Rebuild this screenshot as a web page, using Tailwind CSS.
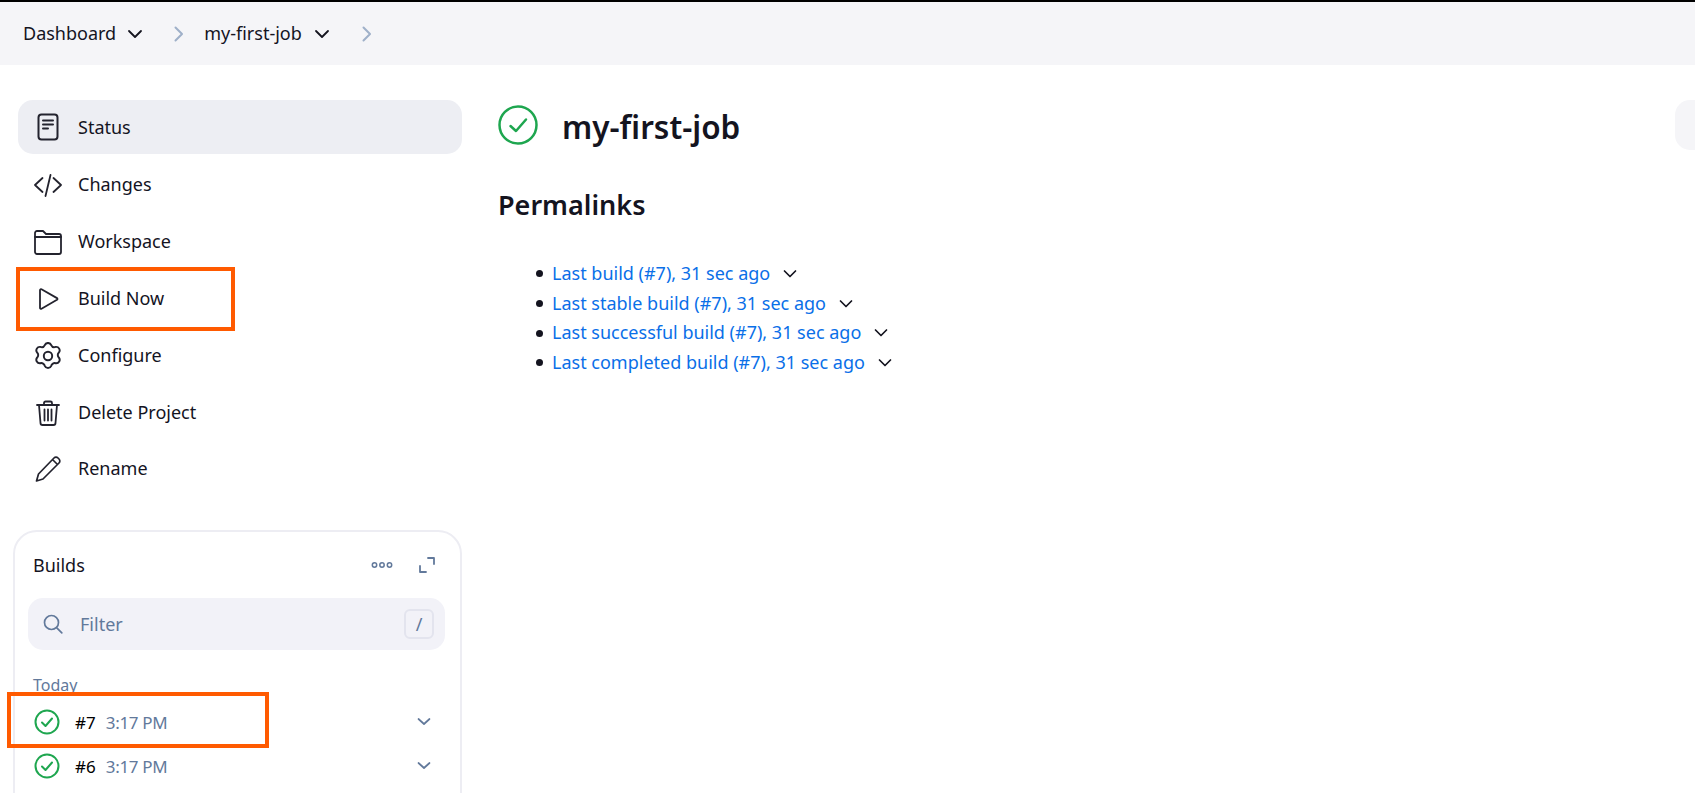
<!DOCTYPE html>
<html lang="en">
<head>
  <meta charset="UTF-8" />
  <title>my-first-job</title>
  <script src="https://cdn.jsdelivr.net/npm/@tailwindcss/browser@4"></script>
</head>
<body class="relative h-[793px] overflow-hidden bg-white font-['Noto_Sans',sans-serif] text-[#14141f]">
  <!-- breadcrumb -->
  <header class="flex h-[65px] items-center border-t-2 border-black bg-[#f5f5f8] pl-[23px] text-[18px]">
    <span>Dashboard</span>
    <svg class="ml-[11px] h-4 w-4" viewBox="0 0 16 16" fill="none" stroke="#14141f" stroke-width="1.800" stroke-linecap="round" stroke-linejoin="round"><path d="M2 5 8 11l6-6"/></svg>
    <svg class="ml-[28px] h-4 w-4" viewBox="0 0 16 16" fill="none" stroke="#9fb0c9" stroke-width="2" stroke-linecap="round" stroke-linejoin="round"><path d="M4.500 1.500 11 8l-6.500 6.500"/></svg>
    <span class="ml-[17px]">my-first-job</span>
    <svg class="ml-[12px] h-4 w-4" viewBox="0 0 16 16" fill="none" stroke="#14141f" stroke-width="1.800" stroke-linecap="round" stroke-linejoin="round"><path d="M2 5 8 11l6-6"/></svg>
    <svg class="ml-[29px] h-4 w-4" viewBox="0 0 16 16" fill="none" stroke="#9fb0c9" stroke-width="2" stroke-linecap="round" stroke-linejoin="round"><path d="M4.500 1.500 11 8l-6.500 6.500"/></svg>
  </header>

  <div class="flex">
    <!-- sidebar -->
    <aside class="w-[498px] shrink-0 pt-[35px]">
      <nav class="ml-[18px] w-[444px] text-[18px]">
        <a class="flex h-[54px] items-center rounded-[15px] bg-[#edeef3] pl-[16px]">
          <svg class="h-7 w-7" viewBox="0 0 28 28" fill="none" stroke="#23232e" stroke-width="2" stroke-linecap="round" stroke-linejoin="round"><rect x="4.500" y="1.500" width="19" height="25" rx="3"/><path d="M9 7.500h10M9 11.500h10M9 15.500h5"/></svg>
          <span class="ml-[16px]">Status</span>
        </a>
        <a class="mt-[4px] flex h-[53px] items-center pl-[16px]">
          <svg class="h-7 w-7" viewBox="0 0 28 28" fill="none" stroke="#23232e" stroke-width="1.800" stroke-linecap="round" stroke-linejoin="round"><path d="M8.500 7 1 14l7.500 7M19.500 7 27 14l-7.500 7M16.500 4l-5 21"/></svg>
          <span class="ml-[16px]">Changes</span>
        </a>
        <a class="mt-[4px] flex h-[53px] items-center pl-[16px]">
          <svg class="h-7 w-7" viewBox="0 0 28 28" fill="none" stroke="#23232e" stroke-width="1.800" stroke-linecap="round" stroke-linejoin="round"><path d="M1 7V5a2 2 0 0 1 2-2h6l3 3h13a2 2 0 0 1 2 2v16a2 2 0 0 1-2 2H3a2 2 0 0 1-2-2V7z"/><path d="M1 9h26"/></svg>
          <span class="ml-[16px]">Workspace</span>
        </a>
        <a class="mt-[4px] flex h-[53px] items-center pl-[16px]">
          <svg class="h-7 w-7" viewBox="0 0 28 28" fill="none" stroke="#23232e" stroke-width="1.800" stroke-linecap="round" stroke-linejoin="round"><path d="M6 5v18a1 1 0 0 0 1.500.8L23 14.800a1 1 0 0 0 0-1.700L7.500 4.200A1 1 0 0 0 6 5z"/></svg>
          <span class="ml-[16px]">Build Now</span>
        </a>
        <a class="mt-[4px] flex h-[53px] items-center pl-[16px]">
          <svg class="h-7 w-7" viewBox="2 1 20 20" fill="none" stroke="#23232e" stroke-width="1.400" stroke-linecap="round" stroke-linejoin="round"><path d="M9.700 3.200a2.500 2.500 0 0 1 4.600 0 2.500 2.500 0 0 0 3.200 1.300 2.500 2.500 0 0 1 2.300 4 2.500 2.500 0 0 0 0 3.700 2.500 2.500 0 0 1-2.300 4 2.500 2.500 0 0 0-3.200 1.800 2.500 2.500 0 0 1-4.600 0 2.500 2.500 0 0 0-3.200-1.800 2.500 2.500 0 0 1-2.300-4 2.500 2.500 0 0 0 0-3.700 2.500 2.500 0 0 1 2.300-4 2.500 2.500 0 0 0 3.200-1.300z"/><circle cx="12" cy="11" r="3"/></svg>
          <span class="ml-[16px]">Configure</span>
        </a>
        <a class="mt-[4px] flex h-[53px] items-center pl-[16px]">
          <svg class="h-7 w-7" viewBox="0 0 28 28" fill="none" stroke="#23232e" stroke-width="1.800" stroke-linecap="round" stroke-linejoin="round"><path d="M3 6h22M10 6V4a1.500 1.500 0 0 1 1.500-1.500h5A1.500 1.500 0 0 1 18 4v2M5 6l1.500 18a2 2 0 0 0 2 2h11a2 2 0 0 0 2-2L23 6M10.500 10.500v11M14 10.500v11M17.500 10.500v11"/></svg>
          <span class="ml-[16px]">Delete Project</span>
        </a>
        <a class="mt-[3px] flex h-[53px] items-center pl-[16px]">
          <svg class="h-7 w-7" viewBox="0 0 28 28" fill="none" stroke="#23232e" stroke-width="1.700" stroke-linecap="round" stroke-linejoin="round"><path d="M2.500 26l2-7L20 3a2.800 2.800 0 0 1 4 0l1 1a2.800 2.800 0 0 1 0 4L9 24l-6.500 2zM18.500 4.500l5 5"/></svg>
          <span class="ml-[16px]">Rename</span>
        </a>
      </nav>

      <!-- builds card -->
      <section class="ml-[13px] mt-[35px] h-[300px] w-[449px] rounded-[24px] border-2 border-[#ededf3] pl-[13px] pr-[15px]">
        <div class="flex h-[66px] items-center justify-between pl-[5px] pr-[10px]">
          <span class="text-[18px]">Builds</span>
          <div class="flex items-center gap-[26px]">
            <svg class="h-[8px] w-[22px]" viewBox="0 0 22 8" fill="none" stroke="#62799b" stroke-width="1.500"><circle cx="3.500" cy="4" r="2.200"/><circle cx="11" cy="4" r="2.200"/><circle cx="18.500" cy="4" r="2.200"/></svg>
            <svg class="h-4 w-4" viewBox="0 0 16 16" fill="none" stroke="#62799b" stroke-width="1.800" stroke-linecap="round" stroke-linejoin="round"><path d="M9 1h6v6M1 9v6h6"/></svg>
          </div>
        </div>
        <div class="flex h-[52px] items-center rounded-[15px] bg-[#f2f2f8] pl-[15px] pr-[11px]">
          <svg class="h-[20px] w-[20px]" viewBox="0 0 20 20" fill="none" stroke="#62799b" stroke-width="1.700" stroke-linecap="round"><circle cx="8.500" cy="8.500" r="7"/><path d="m13.800 13.800 5 5"/></svg>
          <span class="ml-[17px] text-[18px] text-[#62799b]">Filter</span>
          <span class="ml-auto flex h-[30px] w-[30px] items-center justify-center rounded-[6px] border-2 border-[#e3e4ee] text-[18px] text-[#62799b]">/</span>
        </div>
        <div class="mt-[23px] pl-[5px] text-[16px] leading-[24px] text-[#62799b]">Today</div>
        <ul class="mt-[3px]">
          <li class="flex h-[44px] items-center pl-[6px] pr-[13px]">
            <svg class="h-[26px] w-[26px]" viewBox="0 0 26 26" fill="none" stroke="#1ea64f" stroke-width="2" stroke-linecap="round" stroke-linejoin="round"><circle cx="13" cy="13" r="11.500"/><path d="m8 13.500 3.500 3.500 6.500-7.500"/></svg>
            <span class="ml-[15px] pt-[2px] text-[17px] text-black">#7</span>
            <span class="ml-[10px] pt-[2px] text-[17px] tracking-[-0.3px] text-[#62799b]">3:17 PM</span>
            <svg class="ml-auto h-4 w-4" viewBox="0 0 16 16" fill="none" stroke="#62799b" stroke-width="1.700" stroke-linecap="round" stroke-linejoin="round"><path d="M2.500 5 8 10l5.500-5"/></svg>
          </li>
          <li class="flex h-[44px] items-center pl-[6px] pr-[13px]">
            <svg class="h-[26px] w-[26px]" viewBox="0 0 26 26" fill="none" stroke="#1ea64f" stroke-width="2" stroke-linecap="round" stroke-linejoin="round"><circle cx="13" cy="13" r="11.500"/><path d="m8 13.500 3.500 3.500 6.500-7.500"/></svg>
            <span class="ml-[15px] pt-[2px] text-[17px] text-black">#6</span>
            <span class="ml-[10px] pt-[2px] text-[17px] tracking-[-0.3px] text-[#62799b]">3:17 PM</span>
            <svg class="ml-auto h-4 w-4" viewBox="0 0 16 16" fill="none" stroke="#62799b" stroke-width="1.700" stroke-linecap="round" stroke-linejoin="round"><path d="M2.500 5 8 10l5.500-5"/></svg>
          </li>
        </ul>
      </section>
    </aside>

    <!-- main -->
    <main class="relative flex-1 pt-[40px]">
      <div class="flex h-[40px] items-center">
        <svg class="h-[40px] w-[40px]" viewBox="0 0 40 40" fill="none" stroke="#1ea64f" stroke-width="2.500" stroke-linecap="round" stroke-linejoin="round"><circle cx="20" cy="20" r="18.500"/><path d="m12.500 21 5.500 5 10-11.500"/></svg>
        <h1 class="ml-[24px] pt-[4px] text-[31.500px] font-semibold">my-first-job</h1>
      </div>
      <h2 class="mt-[42px] text-[27px] font-semibold leading-[36px]">Permalinks</h2>
      <ul class="ml-[38px] mt-[36px] text-[18px] leading-[29.700px]">
        <li class="flex items-center">
          <span class="mr-[9px] h-[7px] w-[7px] rounded-full bg-[#14141f]"></span>
          <a class="text-[#0a6fe8]">Last build (#7), 31 sec ago</a>
          <svg class="ml-[13px] h-[14px] w-[14px]" viewBox="0 0 14 14" fill="none" stroke="#14141f" stroke-width="1.700" stroke-linecap="round" stroke-linejoin="round"><path d="M1.500 4 7 9.500 12.500 4"/></svg>
        </li>
        <li class="flex items-center">
          <span class="mr-[9px] h-[7px] w-[7px] rounded-full bg-[#14141f]"></span>
          <a class="text-[#0a6fe8]">Last stable build (#7), 31 sec ago</a>
          <svg class="ml-[13px] h-[14px] w-[14px]" viewBox="0 0 14 14" fill="none" stroke="#14141f" stroke-width="1.700" stroke-linecap="round" stroke-linejoin="round"><path d="M1.500 4 7 9.500 12.500 4"/></svg>
        </li>
        <li class="flex items-center">
          <span class="mr-[9px] h-[7px] w-[7px] rounded-full bg-[#14141f]"></span>
          <a class="text-[#0a6fe8]">Last successful build (#7), 31 sec ago</a>
          <svg class="ml-[13px] h-[14px] w-[14px]" viewBox="0 0 14 14" fill="none" stroke="#14141f" stroke-width="1.700" stroke-linecap="round" stroke-linejoin="round"><path d="M1.500 4 7 9.500 12.500 4"/></svg>
        </li>
        <li class="flex items-center">
          <span class="mr-[9px] h-[7px] w-[7px] rounded-full bg-[#14141f]"></span>
          <a class="text-[#0a6fe8]">Last completed build (#7), 31 sec ago</a>
          <svg class="ml-[13px] h-[14px] w-[14px]" viewBox="0 0 14 14" fill="none" stroke="#14141f" stroke-width="1.700" stroke-linecap="round" stroke-linejoin="round"><path d="M1.500 4 7 9.500 12.500 4"/></svg>
        </li>
      </ul>
      <div class="absolute right-0 top-[35px] h-[50px] w-[20px] rounded-l-[15px] bg-[#f5f5f8]"></div>
    </main>
  </div>

  <!-- orange annotation boxes drawn on the screenshot -->
  <div class="absolute left-[16px] top-[267px] h-[64px] w-[219px] border-[4px] border-[#ff5a00]"></div>
  <div class="absolute left-[7px] top-[692px] h-[56px] w-[262px] border-[4px] border-[#ff5a00]"></div>
</body>
</html>
